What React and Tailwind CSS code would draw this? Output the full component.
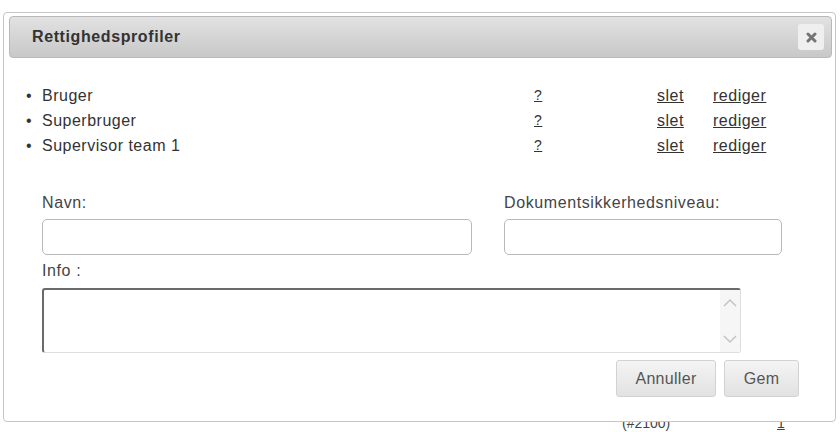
const profiles = ["Bruger", "Superbruger", "Supervisor team 1"];

function CloseIcon() {
  return (
    <svg width="11" height="11" viewBox="0 0 11 11">
      <path d="M2 2 L9 9 M9 2 L2 9" stroke="#747474" strokeWidth="3" strokeLinecap="round" />
    </svg>
  );
}

function Chevron({ up }) {
  return (
    <svg width="14" height="9" viewBox="0 0 14 9">
      <path
        d={up ? "M1 8 L7 2 L13 8" : "M1 1 L7 7 L13 1"}
        fill="none"
        stroke="#c4c4c4"
        strokeWidth="1.5"
      />
    </svg>
  );
}

export default function App() {
  return (
    <div className="w-[840px] h-[432px] overflow-hidden bg-white [font-family:Liberation_Sans,Arial,sans-serif] text-[#333]">
      <div className="relative z-10 ml-[3px] mt-[12px] w-[833px] h-[410px] bg-white border border-[#c6c6c6] rounded-[4px] pt-[3px] pl-[5px] pr-[3px]">
        <div className="h-[42px] flex items-center justify-between rounded-[4px] border border-[#b9b9b9] bg-gradient-to-b from-[#e2e2e2] to-[#c8c8c8] pl-[22px] pr-[7px]">
          <span className="text-[16px] font-bold text-[#333] tracking-[0.6px]">Rettighedsprofiler</span>
          <button className="w-[26px] h-[26px] flex items-center justify-center rounded-[3px] bg-[#efefef]">
            <CloseIcon />
          </button>
        </div>

        <ul className="mt-[25px] text-[16px] tracking-[0.5px] leading-[25px]">
          {profiles.map((p) => (
            <li key={p} className="flex">
              <span className="w-[14px] ml-[17px] text-[#333]">•</span>
              <span className="w-[494px] pl-[2px]">{p}</span>
              <span className="w-[123px] underline text-[14px]">?</span>
              <span className="w-[56px] underline">slet</span>
              <span className="underline">rediger</span>
            </li>
          ))}
        </ul>

        <div className="mt-[36px] pl-[33px] flex gap-[32px] text-[16px] tracking-[0.6px] text-[#444]">
          <div className="flex flex-col">
            <label className="leading-[18px]">Navn:</label>
            <input className="mt-[7px] w-[430px] h-[36px] border border-[#b9b9b9] rounded-[5px] outline-none" />
          </div>
          <div className="flex flex-col">
            <label className="leading-[18px]">Dokumentsikkerhedsniveau:</label>
            <input className="mt-[7px] w-[278px] h-[36px] border border-[#b9b9b9] rounded-[5px] outline-none" />
          </div>
        </div>

        <div className="pl-[33px] mt-[7px] text-[16px] tracking-[0.6px] text-[#444] leading-[18px]">Info :</div>
        <div className="ml-[33px] mt-[8px] w-[699px] h-[65px] flex rounded-[3px] border-t-2 border-l-2 border-r border-b border-t-[#6a6a6a] border-l-[#6a6a6a] border-r-[#dedede] border-b-[#dedede]">
          <div className="flex-1" />
          <div className="w-[20px] bg-[#f6f6f6] flex flex-col items-center justify-between py-[8px]">
            <Chevron up />
            <Chevron />
          </div>
        </div>

        <div className="mt-[7px] flex justify-end gap-[8px] pr-[33px]">
          <button className="w-[100px] h-[37px] rounded-[3px] border border-[#d2d2d2] bg-gradient-to-b from-[#f4f4f4] to-[#e2e2e2] text-[16px] tracking-[0.3px] text-[#555]">
            Annuller
          </button>
          <button className="w-[75px] h-[37px] rounded-[3px] border border-[#d2d2d2] bg-gradient-to-b from-[#f4f4f4] to-[#e2e2e2] text-[16px] tracking-[0.3px] text-[#555]">
            Gem
          </button>
        </div>
      </div>

      <div className="-mt-[8px] flex text-[14px] text-[#444] leading-[18px]">
        <span className="ml-[622px] w-[155px]">(#2100)</span>
        <span className="underline">1</span>
      </div>
    </div>
  );
}
